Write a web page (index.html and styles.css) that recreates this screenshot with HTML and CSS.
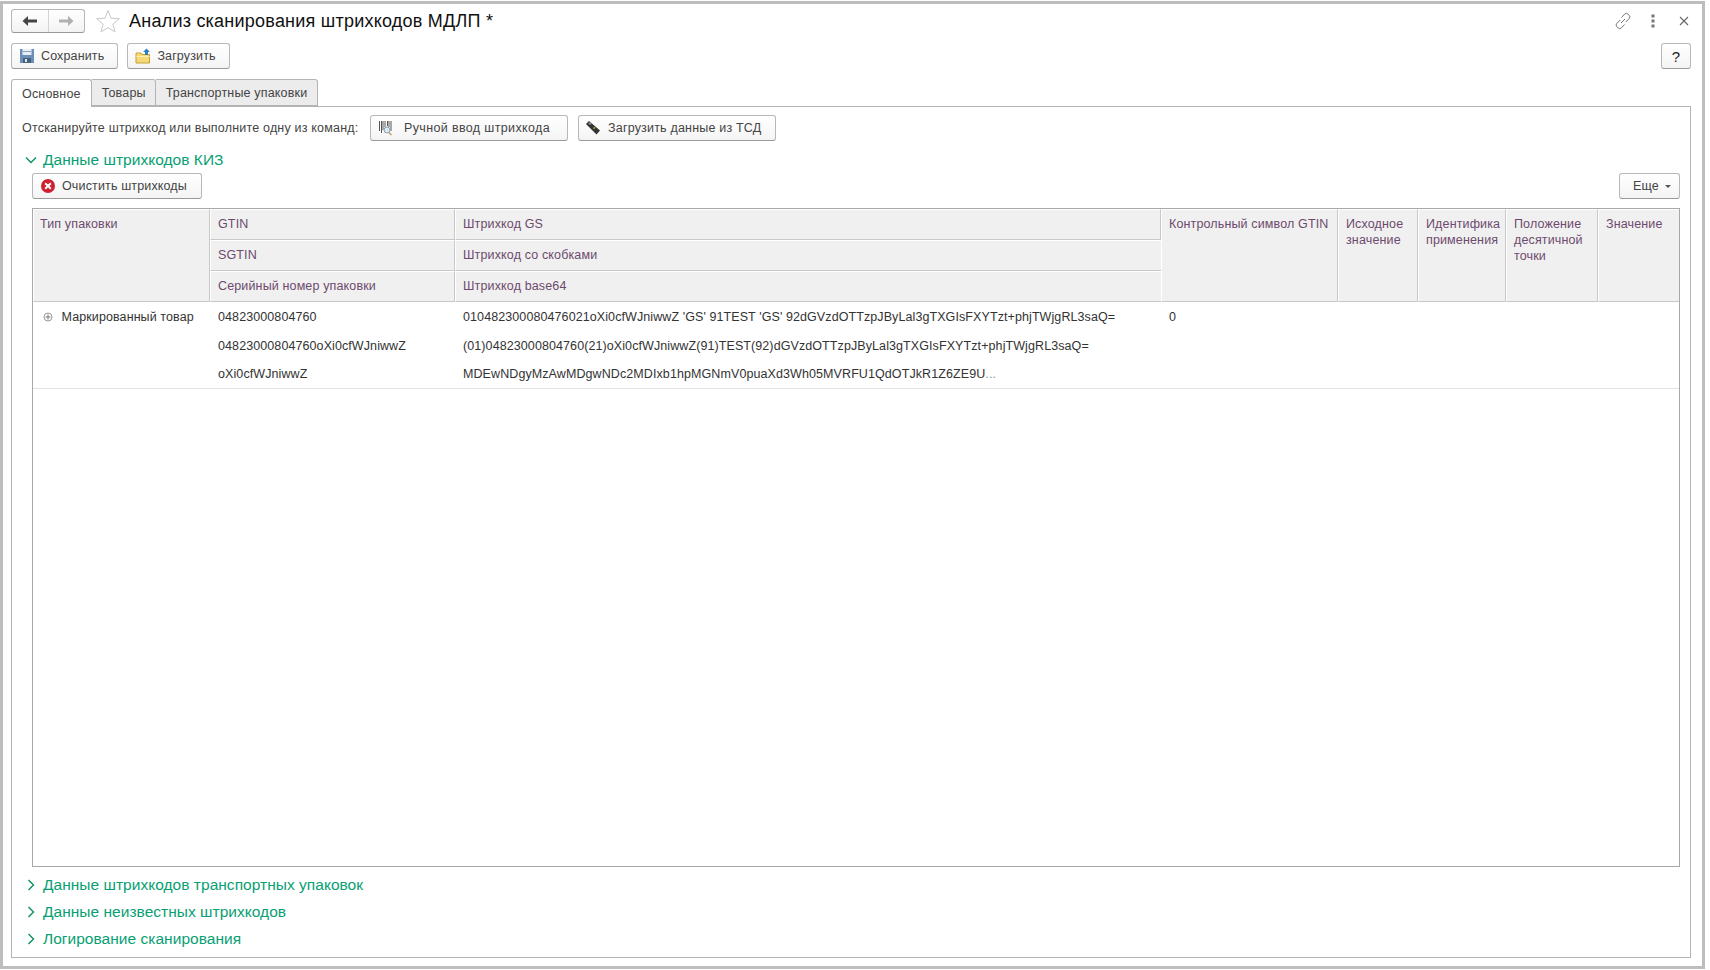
FILE: index.html
```html
<!DOCTYPE html>
<html lang="ru">
<head>
    <meta charset="UTF-8">
    <title>Анализ сканирования штрихкодов МДЛП</title>
    <link rel="stylesheet" href="styles.css">
</head>
<body>
    <div class="window">
        <div class="title-row">
            <div class="nav-group">
                <span class="nav-btn">
                    <svg width="16" height="12" viewBox="0 0 16 12"><path d="M0.5 6L6 1v3.4h9v3.2H6V11z" fill="#444"/></svg>
                </span>
                <span class="nav-btn">
                    <svg width="16" height="12" viewBox="0 0 16 12"><path d="M15.500 6L10 1v3.400H1v3.200h9V11z" fill="#b0b0b0"/></svg>
                </span>
            </div>
            <svg class="star" width="24" height="24" viewBox="0 0 24 24"><path d="M12 1.500l3 7.700 8.300.5-6.400 5.300 2.100 8-7-4.400-7 4.400 2.100-8L.7 9.700 9 9.200z" fill="#fff" stroke="#c8c8c8"/></svg>
            <h1 class="title">Анализ сканирования штрихкодов МДЛП *</h1>
            <div class="window-actions">
                <svg class="act-link" width="18" height="18" viewBox="0 0 18 18" fill="none" stroke="#777"><path d="M7.500 5.500l3-3.300a2.500 2.500 0 0 1 3.600 0l1 1a2.500 2.500 0 0 1 0 3.500l-3.300 3.300"/><path d="M10.500 12.500l-3 3.300a2.500 2.500 0 0 1-3.600 0l-1-1a2.500 2.500 0 0 1 0-3.500l3.300-3.300"/><path d="M7 11l4-4"/></svg>
                <svg class="act-dots" width="4" height="14" viewBox="0 0 4 14"><rect x="0.500" y="0.500" width="3" height="3" fill="#777"/><rect x="0.500" y="5.500" width="3" height="3" fill="#777"/><rect x="0.500" y="10.500" width="3" height="3" fill="#777"/></svg>
                <svg class="act-close" width="10" height="10" viewBox="0 0 10 10"><path d="M1 1l8 8M9 1l-8 8" stroke="#666" stroke-width="1.100"/></svg>
            </div>
        </div>

        <div class="toolbar">
            <button class="btn">
                <svg width="16" height="16" viewBox="0 0 16 16"><rect x="1" y="1" width="14" height="14" fill="#6a8fb8"/><rect x="3.500" y="1" width="9" height="6" fill="#e8eef5"/><rect x="4" y="10" width="8" height="5" fill="#47607c"/><rect x="4" y="3" width="8" height="1" fill="#8aa0b8"/><rect x="6" y="11" width="2" height="3" fill="#dfe7f0"/></svg>
                Сохранить
            </button>
            <button class="btn">
                <svg width="16" height="16" viewBox="0 0 16 16"><path d="M1 5h5l1 1.500h7.500V15H1z" fill="#f5d878" stroke="#c9a030"/><path d="M1.500 8.500h13" stroke="#fbeeb5"/><path d="M11.500 0.500l3.500 3.500h-2v3h-3V4H8z" fill="#2f7fc1"/></svg>
                Загрузить
            </button>
            <button class="btn btn-help">?</button>
        </div>

        <div class="tabs">
            <span class="tab tab-active">Основное</span>
            <span class="tab tab-goods">Товары</span>
            <span class="tab">Транспортные упаковки</span>
        </div>

        <div class="panel">
            <div class="command-row">
                <span class="hint">Отсканируйте штрихкод или выполните одну из команд:</span>
                <button class="btn btn-scan">
                    <svg width="16" height="16" viewBox="0 0 16 16"><path d="M1.500 1v10M3.500 1v12M5 1v9M7 1v6M9.500 1v5M11 1v6M13 1v10" stroke="#555"/><circle cx="9" cy="10" r="3" fill="#dbe9f4" stroke="#8b9fb0"/><path d="M11 12.500l2.500 2.500" stroke="#c89a5a" stroke-width="1.500"/></svg>
                    Ручной ввод штрихкода
                </button>
                <button class="btn btn-tsd">
                    <svg width="16" height="16" viewBox="0 0 16 16"><path d="M1 4l3-3 11 9.500-3.500 4z" fill="#333"/><path d="M3 3.500l2-1.500 2 1.500-2 1.500z" fill="#8d8d8d"/><path d="M8 8l1.500-1 1 1-1.500 1z" fill="#d8b23c"/></svg>
                    Загрузить данные из ТСД
                </button>
            </div>

            <div class="group-head group-open">
                <svg width="12" height="12" viewBox="0 0 12 12"><path d="M1 3.500l5 5 5-5" fill="none" stroke="#0a8f62" stroke-width="1.400"/></svg>
                <span>Данные штрихкодов КИЗ</span>
            </div>

            <div class="group-body">
                <div class="table-bar">
                    <button class="btn btn-clear">
                        <svg width="16" height="16" viewBox="0 0 16 16"><circle cx="8" cy="8" r="7" fill="#cf2030"/><path d="M5.200 5.200l5.600 5.600M10.800 5.200l-5.600 5.600" stroke="#fff" stroke-width="2"/></svg>
                        Очистить штрихкоды
                    </button>
                    <button class="btn btn-more">Еще <i class="caret"></i></button>
                </div>

                <div class="table-wrap">
                    <table class="grid">
                        <colgroup>
                            <col class="c-type"><col class="c-gtin"><col class="c-code"><col class="c-check">
                            <col class="c-src"><col class="c-id"><col class="c-point"><col class="c-val">
                        </colgroup>
                        <thead>
                            <tr>
                                <th rowspan="3" class="th-first">Тип упаковки</th>
                                <th>GTIN</th>
                                <th>Штрихкод GS</th>
                                <th rowspan="3" class="th-line">Контрольный символ GTIN</th>
                                <th rowspan="3">Исходное значение</th>
                                <th rowspan="3">Идентифика применения</th>
                                <th rowspan="3">Положение десятичной точки</th>
                                <th rowspan="3">Значение</th>
                            </tr>
                            <tr>
                                <th>SGTIN</th>
                                <th>Штрихкод со скобками</th>
                            </tr>
                            <tr>
                                <th>Серийный номер упаковки</th>
                                <th>Штрихкод base64</th>
                            </tr>
                        </thead>
                        <tbody>
                            <tr>
                                <td rowspan="3" class="cell-type">
                                    <svg width="10" height="10" viewBox="0 0 10 10"><circle cx="5" cy="5" r="4" fill="#fff" stroke="#999"/><path d="M2.500 5h5M5 2.500v5" stroke="#777"/></svg>
                                    Маркированный товар
                                </td>
                                <td>04823000804760</td>
                                <td>010482300080476021oXi0cfWJniwwZ 'GS' 91TEST 'GS' 92dGVzdOTTzpJByLal3gTXGIsFXYTzt+phjTWjgRL3saQ=</td>
                                <td rowspan="3" class="cell-top">0</td>
                                <td rowspan="3"></td>
                                <td rowspan="3"></td>
                                <td rowspan="3"></td>
                                <td rowspan="3"></td>
                            </tr>
                            <tr>
                                <td>04823000804760oXi0cfWJniwwZ</td>
                                <td>(01)04823000804760(21)oXi0cfWJniwwZ(91)TEST(92)dGVzdOTTzpJByLal3gTXGIsFXYTzt+phjTWjgRL3saQ=</td>
                            </tr>
                            <tr>
                                <td>oXi0cfWJniwwZ</td>
                                <td>MDEwNDgyMzAwMDgwNDc2MDIxb1hpMGNmV0puaXd3Wh05MVRFU1QdOTJkR1Z6ZE9U<span class="more">...</span></td>
                            </tr>
                        </tbody>
                    </table>
                </div>
            </div>

            <div class="group-head">
                <svg width="12" height="12" viewBox="0 0 12 12"><path d="M3.500 1l5 5-5 5" fill="none" stroke="#0a8f62" stroke-width="1.400"/></svg>
                <span>Данные штрихкодов транспортных упаковок</span>
            </div>
            <div class="group-head">
                <svg width="12" height="12" viewBox="0 0 12 12"><path d="M3.500 1l5 5-5 5" fill="none" stroke="#0a8f62" stroke-width="1.400"/></svg>
                <span>Данные неизвестных штрихкодов</span>
            </div>
            <div class="group-head">
                <svg width="12" height="12" viewBox="0 0 12 12"><path d="M3.500 1l5 5-5 5" fill="none" stroke="#0a8f62" stroke-width="1.400"/></svg>
                <span>Логирование сканирования</span>
            </div>
        </div>
    </div>
</body>
</html>
```

FILE: styles.css
```css
* {
    box-sizing: border-box;
}
body {
    margin: 0;
    background-color: #fff;
    font-family: "Liberation Sans", Arial, sans-serif;
    font-size: 12.5px;
    color: #444;
}
.window {
    width: 1705px;
    height: 968px;
    margin-top: 1px;
    padding: 5px 11px 8px 8px;
    border: 3px solid #bdbdbd;
    display: flex;
    flex-direction: column;
}
.title-row {
    height: 24px;
    display: flex;
    align-items: center;
}
.nav-group {
    width: 74px;
    height: 24px;
    display: flex;
    border: 1px solid #b5b5b5;
    border-bottom-color: #999;
    border-radius: 3px;
    background: linear-gradient(#fff, #f3f3f3);
}
.nav-btn {
    flex: 1;
    display: flex;
    align-items: center;
    justify-content: center;
}
.nav-btn + .nav-btn {
    border-left: 1px solid #d4d4d4;
}
.star {
    margin-left: 11px;
}
.title {
    margin: 0 0 0 9px;
    font-size: 18px;
    font-weight: normal;
    letter-spacing: 0.23px;
    color: #111;
}
.window-actions {
    margin-left: auto;
    margin-right: 2px;
    display: flex;
    align-items: center;
}
.act-dots {
    margin-left: 19px;
}
.act-close {
    margin-left: 24px;
}
.toolbar {
    margin-top: 10px;
    display: flex;
    gap: 9px;
}
.btn {
    height: 26px;
    padding: 0 13px 0 7px;
    display: flex;
    align-items: center;
    gap: 6px;
    border: 1px solid #b8b8b8;
    border-bottom-color: #999;
    border-radius: 3px;
    background: linear-gradient(#fff, #f4f4f4);
    font-family: inherit;
    font-size: 12.5px;
    letter-spacing: 0.14px;
    color: #444;
}
.btn-help {
    width: 30px;
    margin-left: auto;
    padding: 0;
    justify-content: center;
    font-size: 15px;
    color: #222;
}
.tabs {
    margin-top: 10px;
    height: 27px;
    display: flex;
    position: relative;
    z-index: 1;
    letter-spacing: 0.17px;
}
.tab {
    height: 27px;
    padding: 0 10px;
    display: flex;
    align-items: center;
    background-color: #ececec;
    border: 1px solid #b4b4b4;
    border-left-width: 0;
    border-radius: 0 3px 0 0;
}
.tab-active {
    height: 28px;
    background-color: #fff;
    border-left-width: 1px;
    border-bottom: 0;
    border-radius: 3px 3px 0 0;
}
.tab-goods {
    padding-right: 9px;
}
.panel {
    flex: 1;
    min-height: 0;
    padding: 8px 10px 5px;
    display: flex;
    flex-direction: column;
    border: 1px solid #b4b4b4;
}
.command-row {
    height: 26px;
    display: flex;
    align-items: center;
}
.hint {
    width: 348px;
    letter-spacing: 0.19px;
}
.btn-scan {
    width: 198px;
    gap: 10px;
    margin-right: 10px;
    letter-spacing: 0.36px;
}
.btn-tsd {
    width: 198px;
    padding-left: 6px;
    gap: 7px;
    letter-spacing: 0.19px;
}
.btn-clear {
    padding-right: 14px;
}
.group-head {
    height: 27px;
    display: flex;
    align-items: center;
    gap: 6px;
    padding-left: 3px;
    font-size: 15.5px;
    letter-spacing: 0.03px;
    color: #07a073;
}
.group-open {
    height: 32px;
    padding-top: 6px;
}
.group-body {
    flex: 1;
    min-height: 0;
    padding-left: 10px;
    display: flex;
    flex-direction: column;
    margin-bottom: 4px;
}
.table-bar {
    height: 26px;
    display: flex;
    justify-content: space-between;
}
.btn-more {
    width: 61px;
    padding: 0 0 0 13px;
    gap: 6px;
}
.caret {
    width: 0;
    height: 0;
    border: 3px solid transparent;
    border-top: 3px solid #555;
    border-bottom: 0;
}
.table-wrap {
    flex: 1;
    min-height: 0;
    margin-top: 9px;
    border: 1px solid #a8a8a8;
    background-color: #fff;
}
.grid {
    width: 100%;
    table-layout: fixed;
    border-collapse: separate;
    border-spacing: 0;
}
.c-type { width: 177px; }
.c-gtin { width: 245px; }
.c-code { width: 706px; }
.c-check { width: 177px; }
.c-src { width: 80px; }
.c-id { width: 88px; }
.c-point { width: 92px; }
.grid th {
    height: 31px;
    padding: 6px 4px 0 7px;
    vertical-align: top;
    text-align: left;
    font-weight: normal;
    line-height: 16px;
    letter-spacing: 0.14px;
    color: #6d4a6d;
    background-color: #f0f0f0;
    border-right: 1px solid #c8c8c8;
    border-left: 1px solid #fff;
    border-bottom: 1px solid #c8c8c8;
    border-top: 1px solid #fff;
}
.grid th:last-child {
    border-right: 0;
}
.grid th.th-first {
    padding-left: 6px;
}
.grid th.th-line {
    white-space: nowrap;
}
.grid td {
    height: 29px;
    padding: 0 8px;
    white-space: nowrap;
    letter-spacing: 0.09px;
    color: #333;
}
.grid tbody tr:last-child td,
.grid td[rowspan] {
    border-bottom: 1px solid #e2e2e2;
}
.cell-type svg {
    margin: 0 5px 0 0;
    vertical-align: -1px;
}
.grid td.cell-type,
.grid td.cell-top {
    vertical-align: top;
    padding-top: 8px;
}
.grid td.cell-type {
    padding-left: 10px;
}
.more {
    color: #7a9ab0;
}
```
